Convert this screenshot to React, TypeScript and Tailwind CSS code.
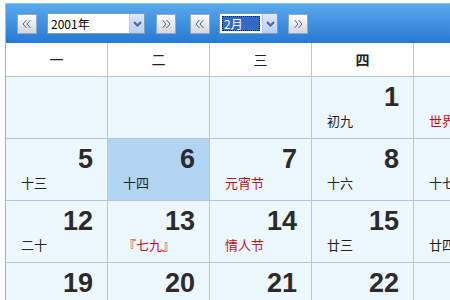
import React from 'react'

interface Day {
  d: number
  l: string
  red?: boolean
}

// 只画截图里能看到的五列（周一到周五）
const weeks: (Day | null)[][] = [
  [null, null, null, { d: 1, l: '初九' }, { d: 2, l: '世界湿地日', red: true }],
  [{ d: 5, l: '十三' }, { d: 6, l: '十四' }, { d: 7, l: '元宵节', red: true }, { d: 8, l: '十六' }, { d: 9, l: '十七' }],
  [{ d: 12, l: '二十' }, { d: 13, l: '『七九』', red: true }, { d: 14, l: '情人节', red: true }, { d: 15, l: '廿三' }, { d: 16, l: '廿四' }],
  [{ d: 19, l: '廿七' }, { d: 20, l: '廿八' }, { d: 21, l: '廿九' }, { d: 22, l: '『八九』', red: true }, { d: 23, l: '二月' }],
]

const heads = ['一', '二', '三', '四', '五']

const cjk = { fontFamily: '"Noto Sans CJK SC", "Liberation Sans", sans-serif' }

// 翻页按钮（XP 风格）
const NavButton: React.FC<{ dir: 'left' | 'right' }> = ({ dir }) => (
  <div className="w-[20px] h-[20px] border border-[#8ea9cc] bg-gradient-to-b from-white to-[#d6d6d6] flex items-center justify-center shrink-0">
    <svg width="12" height="12" viewBox="0 0 12 12" fill="none" stroke="#3a64b4" strokeWidth="1">
      {dir === 'left' ? (
        <>
          <polyline points="5.5,2 2,6 5.5,10" />
          <polyline points="9.5,2 6,6 9.5,10" />
        </>
      ) : (
        <>
          <polyline points="2.5,2 6,6 2.5,10" />
          <polyline points="6.5,2 10,6 6.5,10" />
        </>
      )}
    </svg>
  </div>
)

const DropArrow: React.FC = () => (
  <div className="w-[15px] h-full border-l border-[#b4c8ec] bg-gradient-to-b from-[#dce8fc] to-[#b9cff5] flex items-center justify-center">
    <svg width="9" height="6" viewBox="0 0 9 6" fill="none" stroke="#4d61a0" strokeWidth="2">
      <polyline points="1,1 4.5,4.5 8,1" />
    </svg>
  </div>
)

export default function App() {
  return (
    <div className="w-[450px] h-[300px] overflow-hidden bg-white pt-[3px] pl-[5px]">
      <div className="w-[520px]">
        {/* 工具栏 */}
        <div className="h-[40px] flex items-center pl-[11px] border-t border-l border-[#8cc4ee] bg-gradient-to-b from-[#58a9ec] to-[#2679d4]">
          <NavButton dir="left" />
          <div className="ml-[10px] w-[98px] h-[21px] bg-white border border-[#7f9db9] flex items-stretch">
            <div className="flex-1 pl-[3px] text-[12px] leading-[19px] text-black" style={cjk}>2001年</div>
            <DropArrow />
          </div>
          <div className="ml-[11px]">
            <NavButton dir="right" />
          </div>
          <div className="ml-[14px]">
            <NavButton dir="left" />
          </div>
          <div className="ml-[9px] w-[59px] h-[21px] bg-white border border-[#7f9db9] flex items-stretch">
            <div className="flex-1 p-[2px]">
              <div className="h-full bg-[#316ac5] border border-dotted border-[#1a1a1a] text-white text-[12px] leading-[13px] pl-[1px]" style={cjk}>
                2月
              </div>
            </div>
            <DropArrow />
          </div>
          <div className="ml-[10px]">
            <NavButton dir="right" />
          </div>
        </div>

        {/* 日历表格 */}
        <div className="border-l border-[#9aafc4]">
          <div className="flex">
            {heads.map((h, i) => (
              <div
                key={h}
                className={`w-[102px] h-[34px] shrink-0 bg-white border-r border-b border-[#b4c7da] flex items-center justify-center text-[14px] text-[#222] ${i === 3 ? 'font-bold' : ''}`}
                style={cjk}
              >
                {h}
              </div>
            ))}
          </div>
          {weeks.map((week, wi) => (
            <div key={wi} className="flex">
              {week.map((day, di) => (
                <div
                  key={di}
                  className={`w-[102px] h-[62px] shrink-0 border-r border-b border-[#b4c7da] ${day && day.d === 6 ? 'bg-[#b2d5f4]' : 'bg-[#ecf7fe]'}`}
                >
                  {day && (
                    <div className="flex flex-col pt-[7px]">
                      <div className="text-right pr-[14px] text-[27px] leading-[27px] font-bold text-[#2b2b2b]" style={{ fontFamily: '"Liberation Sans", Arial, sans-serif' }}>
                        {day.d}
                      </div>
                      <div
                        className={`mt-[2px] pl-[15px] text-[13px] leading-[16px] whitespace-nowrap ${day.red ? 'text-[#c0101a]' : 'text-[#222]'}`}
                        style={cjk}
                      >
                        {day.l}
                      </div>
                    </div>
                  )}
                </div>
              ))}
            </div>
          ))}
        </div>
      </div>
    </div>
  )
}
